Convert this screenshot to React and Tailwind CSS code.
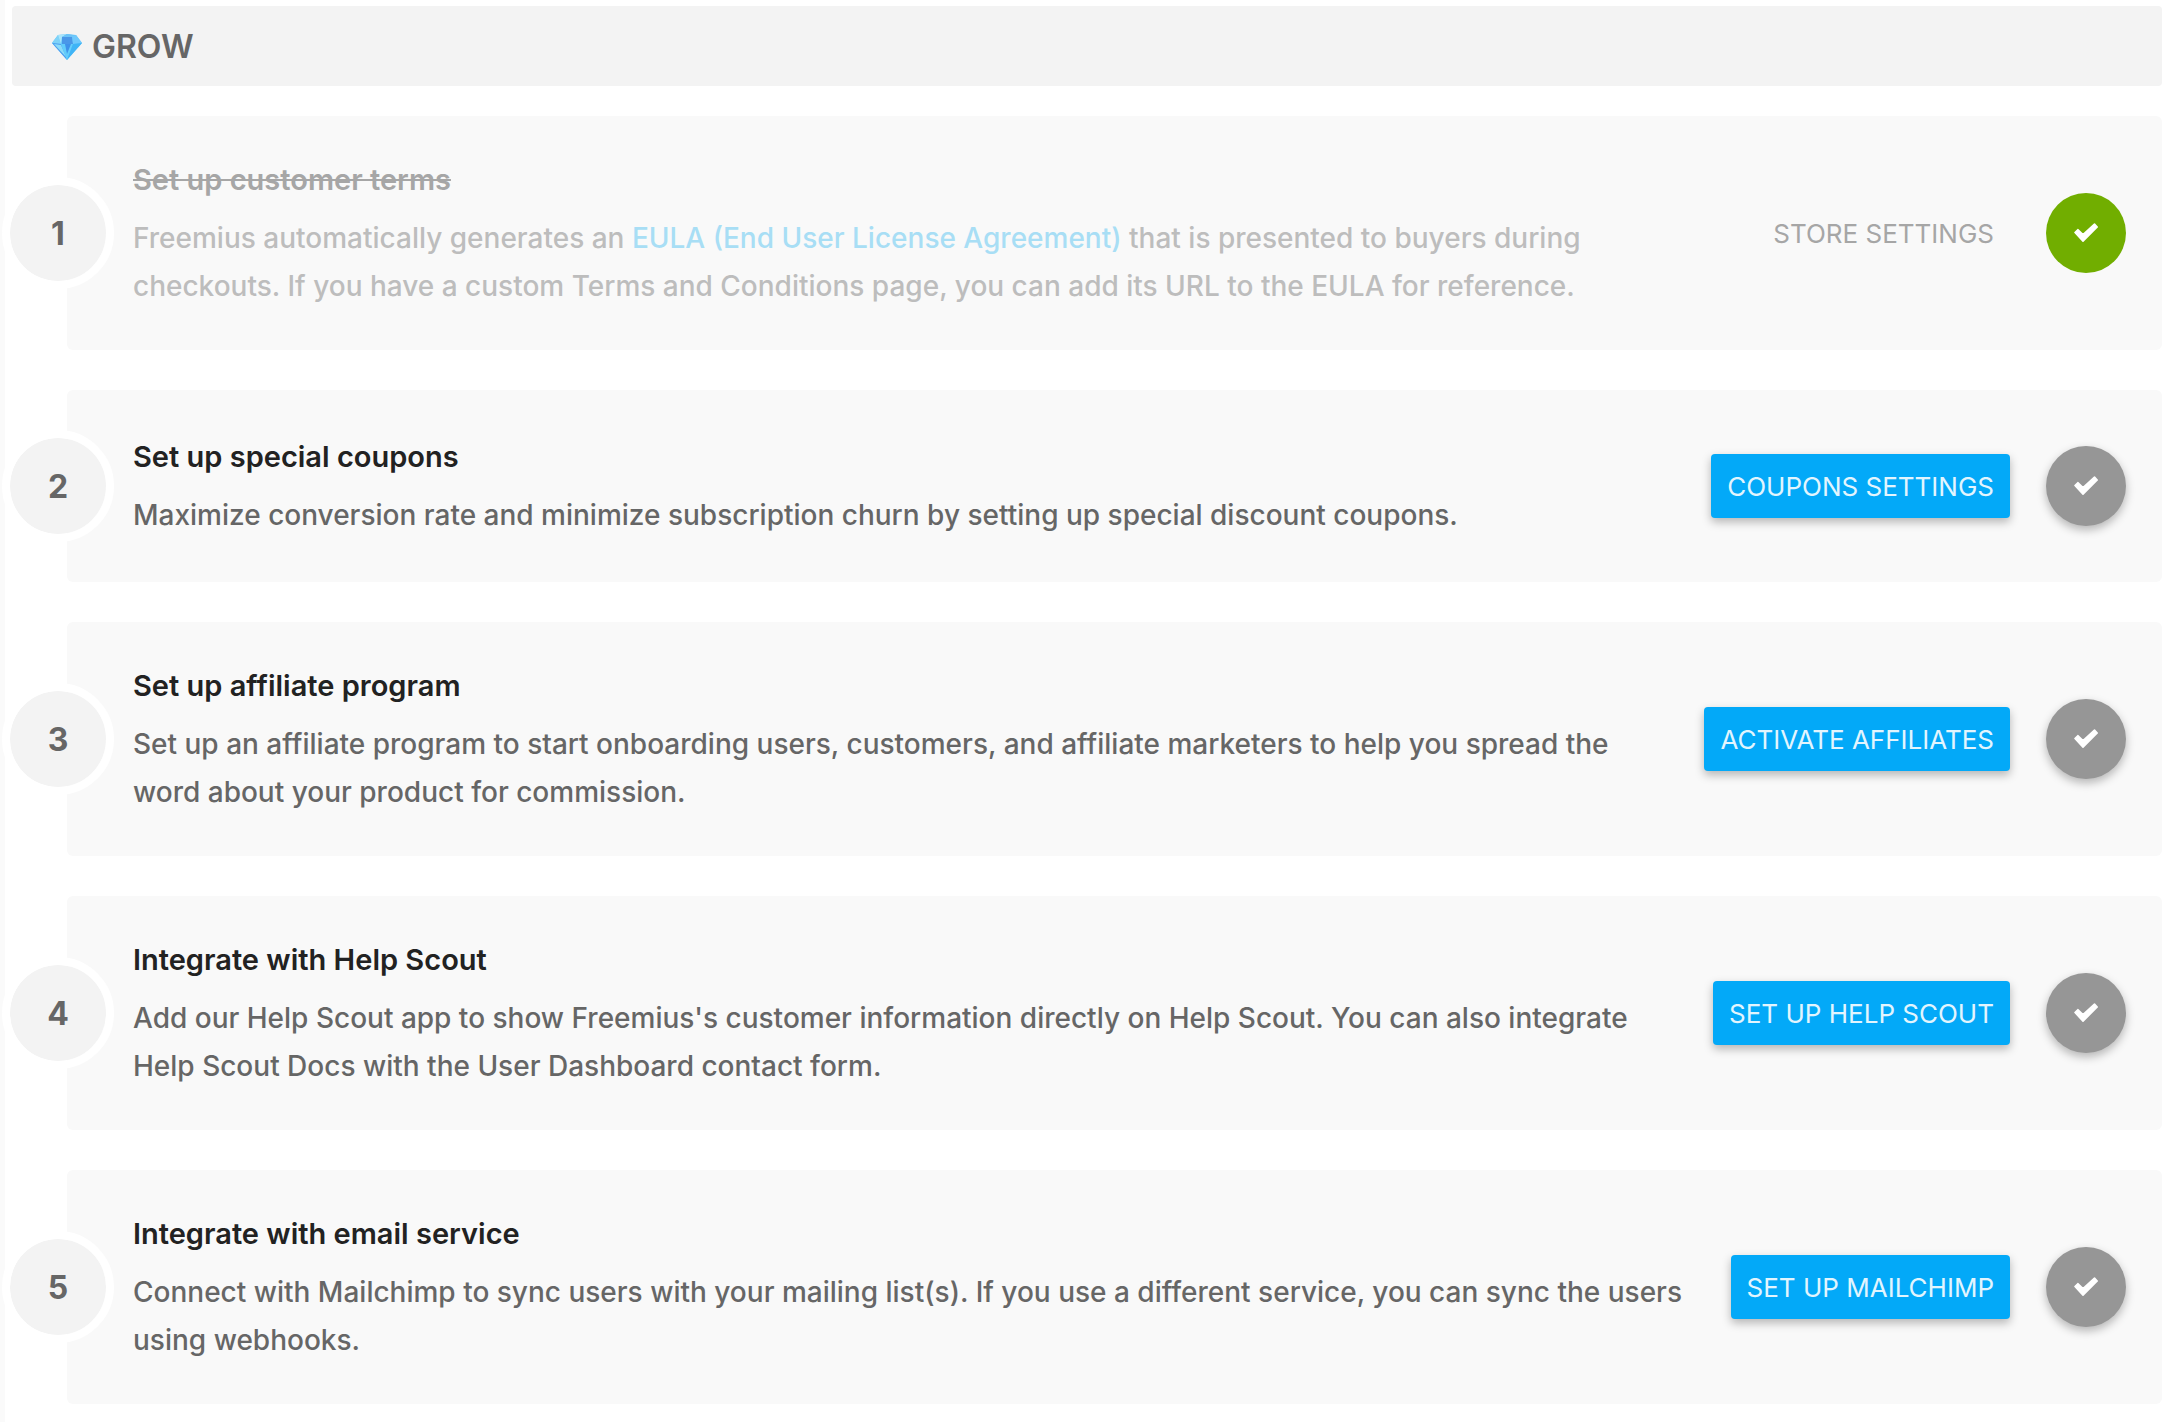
const steps = [
  {
    title: "Set up customer terms",
    done: true,
    action: "Store settings",
    body: (
      <>
        Freemius automatically generates an{" "}
        <a href="#eula" className="text-[#a8def5]">EULA (End User License Agreement)</a>{" "}
        that is presented to buyers during checkouts. If you have a custom Terms and Conditions page, you can add its URL to the EULA for reference.
      </>
    ),
  },
  {
    title: "Set up special coupons",
    action: "Coupons settings",
    body: "Maximize conversion rate and minimize subscription churn by setting up special discount coupons.",
  },
  {
    title: "Set up affiliate program",
    action: "Activate affiliates",
    body: "Set up an affiliate program to start onboarding users, customers, and affiliate marketers to help you spread the word about your product for commission.",
  },
  {
    title: "Integrate with Help Scout",
    action: "Set up Help Scout",
    body: "Add our Help Scout app to show Freemius's customer information directly on Help Scout. You can also integrate Help Scout Docs with the User Dashboard contact form.",
  },
  {
    title: "Integrate with email service",
    action: "Set up Mailchimp",
    body: "Connect with Mailchimp to sync users with your mailing list(s). If you use a different service, you can sync the users using webhooks.",
  },
];

function Gem() {
  return (
    <svg viewBox="0 0 30 26" className="h-[26px] w-[30px]" aria-hidden="true">
      <path d="M6 1 15 0l9 1 6 8-15 17L0 9z" fill="#5fc3f9" />
      <path d="M6 1 0 9l9 1z" fill="#7fd3f8" />
      <path d="M6 1 15 0l-5 3-1 7z" fill="#a9e6fb" />
      <path d="m10 3 10-1 1 8-6 3-5-3z" fill="#4a97e8" />
      <path d="M10 3 15 0l6 1-1 2z" fill="#6cc3f7" />
      <path d="m24 1 6 8-9 1-1-8z" fill="#6fc8fb" />
      <path d="M0 9 9 10l6 16z" fill="#4d9df0" />
      <path d="M2 10 9 11l5 12z" fill="#8bdcf9" />
      <path d="M9 10h12l-6 16z" fill="#63cdfb" />
      <path d="M13 10h6l-4 10z" fill="#3f92ea" />
      <path d="m30 9-9 1-6 16z" fill="#3fb4f6" />
    </svg>
  );
}

function Check() {
  return (
    <svg viewBox="0 0 24 20" className="h-5 w-6" aria-hidden="true">
      <path d="M1 9.500 3.800 6.700 9 11.700 20.500 1 23.200 4 9 18.200z" fill="#fff" stroke="#fff" strokeWidth="1.600" strokeLinejoin="round" />
    </svg>
  );
}

function Step({ step, number }) {
  const { title, done, action, body } = step;
  return (
    <li className="flex items-center">
      <span className="z-10 -mr-[47px] flex size-28 shrink-0 items-center justify-center rounded-full border-8 border-white bg-[#f3f3f3] bg-clip-padding pt-0.5 text-[32px] font-bold text-[#666]">
        {number}
      </span>
      <div className="flex min-h-48 flex-1 items-center rounded-md bg-[#f9f9f9] py-10 pr-9 pl-[66px]">
        <div className="min-w-0 flex-1">
          <h3 className={done ? "mb-2.5 text-[29px] leading-[48px] font-semibold text-[#a6a6a6] line-through" : "mb-2.5 text-[29px] leading-[48px] font-semibold text-[#222]"}>
            {title}
          </h3>
          <p className={done ? "text-[28px] leading-[48px] font-medium text-[#bdbdbd]" : "text-[28px] leading-[48px] font-medium text-[#666]"}>{body}</p>
        </div>
        <button
          type="button"
          className={done
            ? "ml-6 h-16 shrink-0 rounded px-4 text-[26px] text-[#a6a6a6] uppercase"
            : "ml-6 h-16 shrink-0 rounded bg-[#03a9f8] px-4 text-[26px] text-[#e2f5fe] uppercase shadow-[0_4px_10px_rgba(0,0,0,0.28)]"}
        >
          {action}
        </button>
        <button
          type="button"
          aria-label={"Mark step " + number + " as done"}
          aria-pressed={!!done}
          className={done
            ? "ml-9 flex size-20 shrink-0 items-center justify-center rounded-full bg-[#71ae00]"
            : "ml-9 flex size-20 shrink-0 items-center justify-center rounded-full bg-[#969696] shadow-[0_4px_10px_rgba(0,0,0,0.28)]"}
        >
          <Check />
        </button>
      </div>
    </li>
  );
}

export default function App() {
  return (
    <main className="min-h-screen border-l-[5px] border-[#fafafa] bg-white pt-1.5 pr-3 font-['Inter',sans-serif]">
      <h2 className="ml-[7px] flex h-20 items-center gap-2.5 rounded bg-[#f3f3f3] px-10 pt-0.5 text-[32px] font-semibold text-[#666]">
        <Gem />
        GROW
      </h2>
      <ol className="mt-[30px] -ml-[3px] flex flex-col gap-10">
        {steps.map((step, i) => (
          <Step key={step.title} step={step} number={i + 1} />
        ))}
      </ol>
    </main>
  );
}
